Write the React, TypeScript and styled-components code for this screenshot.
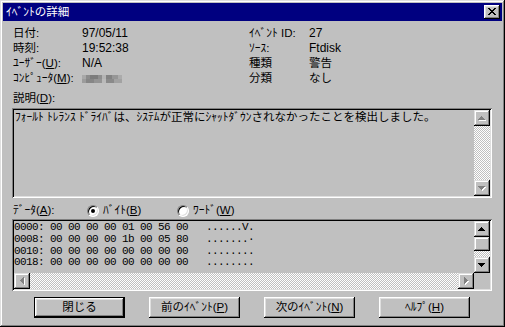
import React from 'react';
import styled, { createGlobalStyle } from 'styled-components';

const GlobalStyle = createGlobalStyle`
  html, body { margin: 0; padding: 0; background: #c0c0c0; }
  body {
    font-family: "Liberation Sans", "Noto Sans CJK JP", sans-serif;
    font-size: 11.5px;
    color: #000;
  }
  * { box-sizing: border-box; }
`;

const raised = `box-shadow: inset -1px -1px #000, inset 1px 1px #fff, inset -2px -2px #808080, inset 2px 2px #dfdfdf;`;
const raisedScroll = `box-shadow: inset -1px -1px #000, inset 1px 1px #dfdfdf, inset -2px -2px #808080, inset 2px 2px #fff;`;
const sunken = `box-shadow: inset 1px 1px #808080, inset -1px -1px #fff, inset 2px 2px #000, inset -2px -2px #dfdfdf;`;

const Window = styled.div`
  width: 505px;
  height: 327px;
  background: #c0c0c0;
  padding: 3px;
  box-shadow: inset -1px -1px #000, inset 1px 1px #dfdfdf, inset -2px -2px #808080, inset 2px 2px #fff;
  display: flex;
  flex-direction: column;
`;

const TitleBar = styled.div`
  height: 18px;
  background: #000080;
  color: #fff;
  display: flex;
  align-items: center;
  justify-content: space-between;
  padding: 0 2px 0 3px;
  line-height: 18px;
`;

const CloseButton = styled.div`
  width: 16px;
  height: 14px;
  background: #c0c0c0;
  ${raised}
  display: flex;
  align-items: center;
  justify-content: center;
  padding-bottom: 1px;
`;

const Body = styled.div`
  flex: 1;
  display: flex;
  flex-direction: column;
  padding: 5px 10px 0 9px;
`;

const InfoGrid = styled.div`
  display: grid;
  grid-template-columns: 69px 167px 60px 1fr;
  grid-auto-rows: 15px;
  align-items: center;
  margin-left: 1px;
  line-height: 15px;
  white-space: nowrap;
`;

const Cell = styled.span<{ $latin?: boolean }>`
  font-size: ${(p) => (p.$latin ? '12px' : '11.5px')};
`;

const Blur = styled.span`
  display: inline-block;
  width: 40px;
  height: 8px;
  vertical-align: middle;
  background:
    linear-gradient(90deg, #a8a8a8 0 4px, #8c8c8c 4px 8px, #7c7c7c 8px 16px, #8e8e8e 16px 20px, #b4b4b4 20px 24px, #828282 24px 30px, #969696 30px 36px, #ababab 36px 40px) top / 40px 4px no-repeat,
    linear-gradient(90deg, #9c9c9c 0 4px, #868686 4px 12px, #949494 12px 20px, #bababa 20px 24px, #8a8a8a 24px 32px, #a2a2a2 32px 40px) bottom / 40px 4px no-repeat;
`;

const SectionLabel = styled.div<{ $gap: number }>`
  margin-top: ${(p) => p.$gap}px;
  margin-left: 1px;
  height: 15px;
  line-height: 15px;
`;

const SunkenBox = styled.div<{ $h: number; $gap: number }>`
  margin-top: ${(p) => p.$gap}px;
  width: 480px;
  height: ${(p) => p.$h}px;
  padding: 2px;
  ${sunken}
  background: #c0c0c0;
`;

const DescInner = styled.div`
  height: 100%;
  display: flex;
`;

const DescText = styled.div`
  flex: 1;
  padding: 1px 1px 0 1px;
  line-height: 12px;
  white-space: nowrap;
  overflow: hidden;
`;

const VScroll = styled.div`
  width: 16px;
  display: flex;
  flex-direction: column;
`;

const HScroll = styled.div`
  height: 16px;
  display: flex;
`;

const Track = styled.div`
  flex: 1;
  background: repeating-conic-gradient(#fff 0 25%, #c0c0c0 0 50%) 0 0 / 2px 2px;
`;

const ScrollBtn = styled.div<{ $len?: number }>`
  width: 16px;
  height: ${(p) => p.$len ?? 16}px;
  flex: none;
  background: #c0c0c0;
  ${raisedScroll}
  display: flex;
  align-items: center;
  justify-content: center;
`;

const DataGrid = styled.div`
  height: 100%;
  display: grid;
  grid-template-columns: 1fr 16px;
  grid-template-rows: 1fr 16px;
`;

const HexArea = styled.pre`
  margin: 0;
  padding: 1px 0 0 0;
  font-family: "Liberation Mono", monospace;
  font-size: 11px;
  letter-spacing: -0.6px;
  line-height: 11.8px;
  overflow: hidden;
`;

const Corner = styled.div`
  background: #c0c0c0;
`;

const DataRow = styled.div`
  margin-top: 5px;
  margin-left: 1px;
  height: 15px;
  display: flex;
  align-items: center;
  line-height: 15px;
`;

const DataLabel = styled.span`
  width: 74px;
`;

const RadioOption = styled.label`
  width: 90px;
  display: flex;
  align-items: center;
  gap: 4px;
`;

const RadioCircle = styled.span<{ $checked?: boolean }>`
  position: relative;
  width: 12px;
  height: 12px;
  border-radius: 50%;
  border: 1px solid;
  border-color: #808080 #fff #fff #808080;
  background: #fff;
  box-shadow: inset 1px 1px #000, inset -1px -1px #dfdfdf;
  &::after {
    content: '';
    display: ${(p) => (p.$checked ? 'block' : 'none')};
    position: absolute;
    left: 3px;
    top: 3px;
    width: 4px;
    height: 4px;
    border-radius: 50%;
    background: #000;
  }
`;

const ButtonRow = styled.div`
  margin-top: 6px;
  display: flex;
  justify-content: center;
  gap: 24px;
`;

const Button = styled.div<{ $default?: boolean }>`
  width: 91px;
  height: 21px;
  background: #c0c0c0;
  display: flex;
  align-items: center;
  justify-content: center;
  line-height: 15px;
  ${(p) =>
    p.$default
      ? `border: 1px solid #000; box-shadow: inset -1px -1px #000, inset 1px 1px #fff, inset -2px -2px #808080, inset 2px 2px #dfdfdf;`
      : raised}
`;

type Dir = 'up' | 'down' | 'left' | 'right';

function Arrow({ dir, disabled }: { dir: Dir; disabled?: boolean }) {
  const vertical = dir === 'up' || dir === 'down';
  const w = vertical ? 7 : 4;
  const h = vertical ? 4 : 7;
  const rects: { x: number; y: number; w: number; h: number }[] = [];
  for (let i = 0; i < 4; i++) {
    const len = 2 * i + 1;
    const off = 3 - i;
    if (dir === 'up') rects.push({ x: off, y: i, w: len, h: 1 });
    if (dir === 'down') rects.push({ x: off, y: 3 - i, w: len, h: 1 });
    if (dir === 'left') rects.push({ x: i, y: off, w: 1, h: len });
    if (dir === 'right') rects.push({ x: 3 - i, y: off, w: 1, h: len });
  }
  return (
    <svg width={w + 1} height={h + 1} viewBox={`0 0 ${w + 1} ${h + 1}`} shapeRendering="crispEdges">
      {disabled &&
        rects.map((r, i) => <rect key={'s' + i} x={r.x + 1} y={r.y + 1} width={r.w} height={r.h} fill="#fff" />)}
      {rects.map((r, i) => (
        <rect key={i} x={r.x} y={r.y} width={r.w} height={r.h} fill={disabled ? '#808080' : '#000'} />
      ))}
    </svg>
  );
}

function CloseGlyph() {
  const rows = ['11000011', '01100110', '00111100', '00011000', '00111100', '01100110', '11000011'];
  return (
    <svg width="8" height="7" viewBox="0 0 8 7" shapeRendering="crispEdges">
      {rows.flatMap((r, y) =>
        r.split('').map((c, x) => (c === '1' ? <rect key={`${x}-${y}`} x={x} y={y} width="1" height="1" fill="#000" /> : null))
      )}
    </svg>
  );
}

const hexLines = [
  '0000: 00 00 00 00 01 00 56 00   ......V.',
  '0008: 00 00 00 00 1b 00 05 80   .......·',
  '0010: 00 00 00 00 00 00 00 00   ........',
  '0018: 00 00 00 00 00 00 00 00   ........',
];

export default function App() {
  return (
    <>
      <GlobalStyle />
      <Window>
        <TitleBar>
          <span>ｲﾍﾞﾝﾄの詳細</span>
          <CloseButton>
            <CloseGlyph />
          </CloseButton>
        </TitleBar>
        <Body>
          <InfoGrid>
            <Cell>日付:</Cell>
            <Cell $latin>97/05/11</Cell>
            <Cell>ｲﾍﾞﾝﾄ ID:</Cell>
            <Cell $latin>27</Cell>

            <Cell>時刻:</Cell>
            <Cell $latin>19:52:38</Cell>
            <Cell>ｿｰｽ:</Cell>
            <Cell $latin>Ftdisk</Cell>

            <Cell>
              ﾕｰｻﾞｰ(<u>U</u>):
            </Cell>
            <Cell $latin>N/A</Cell>
            <Cell>種類</Cell>
            <Cell>警告</Cell>

            <Cell>
              ｺﾝﾋﾟｭｰﾀ(<u>M</u>):
            </Cell>
            <Cell>
              <Blur />
            </Cell>
            <Cell>分類</Cell>
            <Cell>なし</Cell>
          </InfoGrid>

          <SectionLabel $gap={5}>
            説明(<u>D</u>):
          </SectionLabel>
          <SunkenBox $h={90} $gap={2}>
            <DescInner>
              <DescText>ﾌｫｰﾙﾄ ﾄﾚﾗﾝｽ ﾄﾞﾗｲﾊﾞは、ｼｽﾃﾑが正常にｼｬｯﾄﾀﾞｳﾝされなかったことを検出しました。</DescText>
              <VScroll>
                <ScrollBtn>
                  <Arrow dir="up" disabled />
                </ScrollBtn>
                <Track />
                <ScrollBtn>
                  <Arrow dir="down" disabled />
                </ScrollBtn>
              </VScroll>
            </DescInner>
          </SunkenBox>

          <DataRow>
            <DataLabel>
              ﾃﾞｰﾀ(<u>A</u>):
            </DataLabel>
            <RadioOption>
              <RadioCircle $checked />
              <span>
                ﾊﾞｲﾄ(<u>B</u>)
              </span>
            </RadioOption>
            <RadioOption>
              <RadioCircle />
              <span>
                ﾜｰﾄﾞ(<u>W</u>)
              </span>
            </RadioOption>
          </DataRow>
          <SunkenBox $h={72} $gap={1}>
            <DataGrid>
              <HexArea>{hexLines.join('\n')}</HexArea>
              <VScroll>
                <ScrollBtn>
                  <Arrow dir="up" />
                </ScrollBtn>
                <ScrollBtn $len={14} />
                <Track />
                <ScrollBtn>
                  <Arrow dir="down" />
                </ScrollBtn>
              </VScroll>
              <HScroll>
                <ScrollBtn>
                  <Arrow dir="left" disabled />
                </ScrollBtn>
                <Track />
                <ScrollBtn>
                  <Arrow dir="right" disabled />
                </ScrollBtn>
              </HScroll>
              <Corner />
            </DataGrid>
          </SunkenBox>

          <ButtonRow>
            <Button $default>閉じる</Button>
            <Button>
              前のｲﾍﾞﾝﾄ(<u>P</u>)
            </Button>
            <Button>
              次のｲﾍﾞﾝﾄ(<u>N</u>)
            </Button>
            <Button>
              ﾍﾙﾌﾟ(<u>H</u>)
            </Button>
          </ButtonRow>
        </Body>
      </Window>
    </>
  );
}
